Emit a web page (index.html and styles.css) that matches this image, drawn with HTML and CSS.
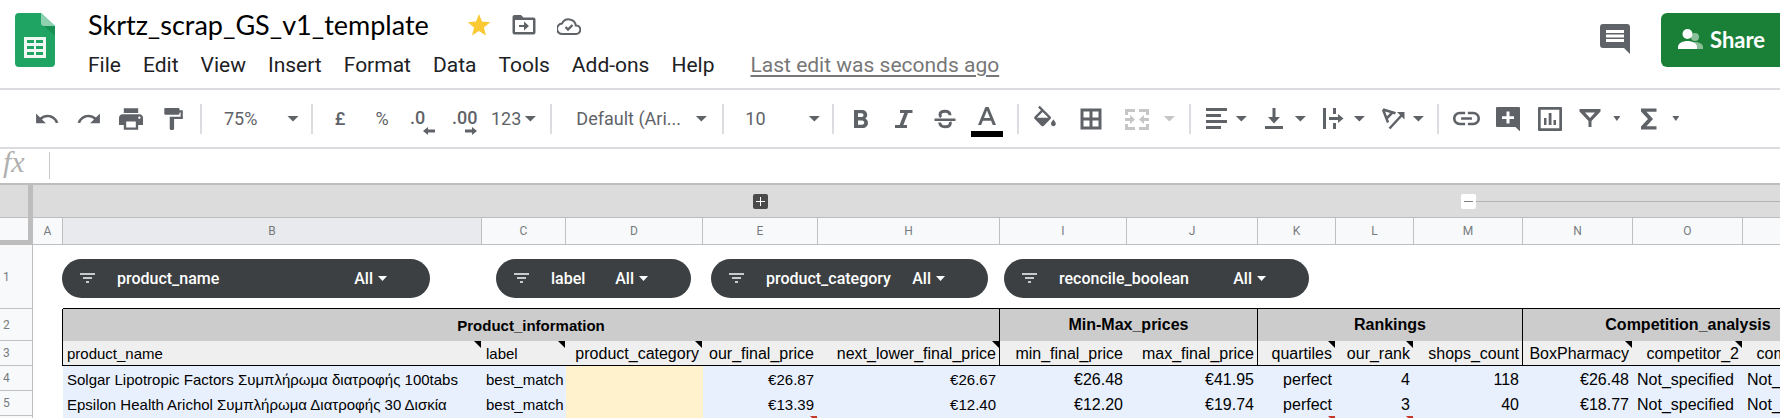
FILE: index.html
```html
<!DOCTYPE html>
<html lang="en">
<head>
<meta charset="utf-8">
<title>Skrtz_scrap_GS_v1_template</title>
<link rel="stylesheet" href="styles.css">
</head>
<body>
<header class="header">
  <svg class="logo" viewBox="0 0 40 54" aria-hidden="true">
    <path fill="#1fa463" d="M4 0h22l14 13v37a4 4 0 0 1-4 4H4a4 4 0 0 1-4-4V4a4 4 0 0 1 4-4z"/>
    <path fill="#188f53" d="M28 12l12 11V13z"/>
    <path fill="#8ed1b1" d="M26 0l14 13H29a3 3 0 0 1-3-3z"/>
    <path fill="#f1f8f4" fill-rule="evenodd" d="M9 24h22v21H9zM12 27v3h7v-3zM21 27v3h7v-3zM12 33v3h7v-3zM21 33v3h7v-3zM12 39v3h7v-3zM21 39v3h7v-3z"/>
  </svg>
  <div class="doc">
    <div class="title-row">
      <h1 class="title">Skrtz_scrap_GS_v1_template</h1>
      <button class="title-btn" aria-label="Star"><svg viewBox="0 0 24 24"><path fill="#fbc934" d="M12 1l3 7.600 8.300.6-6.400 5.200 2.100 8.100L12 18l-7 4.500 2.100-8.100L.7 9.200 9 8.600z"/></svg></button>
      <button class="title-btn" aria-label="Move"><svg viewBox="0 0 24 24"><path fill="#5f6368" fill-rule="evenodd" d="M2.500 2H9l2.500 2.500h10A2 2 0 0 1 23.500 6.500v13a2 2 0 0 1-2 2h-19a2 2 0 0 1-2-2V4a2 2 0 0 1 2-2zM3 7v12h18V7z"/><path fill="#5f6368" d="M12 8.500l5 4.500-5 4.500V14H7v-2h5z"/></svg></button>
      <button class="title-btn" aria-label="Document status"><svg viewBox="0 0 24 24"><path fill="none" stroke="#5f6368" stroke-width="2" d="M5.500 21a5.200 5.200 0 0 1-.5-10.400 7.300 7.300 0 0 1 13.800 1.800A4.300 4.300 0 0 1 19.200 21z"/><path fill="none" stroke="#5f6368" stroke-width="2.400" d="M8.500 14l2.500 2.500 4.500-4.500"/></svg></button>
    </div>
    <nav class="menus">
      <button class="menu">File</button>
      <button class="menu">Edit</button>
      <button class="menu">View</button>
      <button class="menu">Insert</button>
      <button class="menu">Format</button>
      <button class="menu">Data</button>
      <button class="menu">Tools</button>
      <button class="menu">Add-ons</button>
      <button class="menu">Help</button>
      <a class="last-edit" href="#">Last edit was seconds ago</a>
    </nav>
  </div>
  <button class="comments" aria-label="Open comment history"><svg viewBox="0 0 30 30"><path fill="#5f6368" fill-rule="evenodd" d="M3 0h24a3 3 0 0 1 3 3v27l-6-6H3a3 3 0 0 1-3-3V3a3 3 0 0 1 3-3zM6 6v3h18V6zM6 10.500v3h18v-3zM6 15v3h18v-3z"/></svg></button>
  <button class="share"><svg viewBox="0 0 25 20"><circle cx="17" cy="8" r="4" fill="#8cc09a"/><path fill="#8cc09a" d="M16 13c5 0 9 2 9 5v2h-9z"/><circle cx="9.500" cy="5" r="5" fill="#fff"/><path fill="#fff" d="M0 20v-2c0-4 5-6 9.500-6S19 14 19 18v2z"/></svg>Share</button>
</header>

<div class="toolbar" role="toolbar" aria-label="Main">
  <div class="group history">
    <button class="tool" aria-label="Undo"><svg viewBox="1 1 22 22"><path d="M12.500 8c-2.650 0-5.050.99-6.900 2.600L2 7v9h9l-3.620-3.620c1.390-1.160 3.160-1.880 5.120-1.880 3.540 0 6.550 2.310 7.600 5.500l2.370-.78C21.080 11.030 17.150 8 12.500 8z"/></svg></button>
    <button class="tool" aria-label="Redo"><svg viewBox="1 1 22 22"><path d="M18.400 10.600C16.550 8.990 14.150 8 11.500 8c-4.650 0-8.580 3.030-9.960 7.220L3.900 16c1.050-3.190 4.050-5.500 7.600-5.500 1.950 0 3.730.72 5.120 1.880L13 16h9V7l-3.600 3.600z"/></svg></button>
    <button class="tool" aria-label="Print"><svg viewBox="2 2 20 20"><path d="M19 8H5c-1.660 0-3 1.340-3 3v6h4v4h12v-4h4v-6c0-1.660-1.340-3-3-3zm-3 11H8v-5h8v5zm3-7c-.55 0-1-.45-1-1s.45-1 1-1 1 .45 1 1-.45 1-1 1zm-1-9H6v4h12V3z"/></svg></button>
    <button class="tool" aria-label="Paint format"><svg viewBox="1 1 22 22"><path d="M18 4V3c0-.55-.45-1-1-1H5c-.55 0-1 .45-1 1v4c0 .55.450 1 1 1h12c.55 0 1-.45 1-1V6h1v4H9v11c0 .55.450 1 1 1h2c.55 0 1-.45 1-1v-9h8V4h-3z"/></svg></button>
  </div>
  <span class="sep"></span>
  <label class="pick zoom"><select aria-label="Zoom"><option>75%</option></select><span class="caret"></span></label>
  <span class="sep"></span>
  <div class="group numbers">
    <button class="tool strong">£</button>
    <button class="tool">%</button>
    <button class="tool dec" aria-label="Decrease decimal places"><span>.0</span><svg viewBox="0 0 12 8"><path d="M0 4l5-4v2.500h7v3H5V8z"/></svg></button>
    <button class="tool dec" aria-label="Increase decimal places"><span>.00</span><svg viewBox="0 0 12 8"><path d="M12 4L7 0v2.500H0v3h7V8z"/></svg></button>
    <button class="formats">123<span class="caret"></span></button>
  </div>
  <span class="sep"></span>
  <label class="pick font"><select aria-label="Font"><option>Default (Ari...</option></select><span class="caret"></span></label>
  <span class="sep"></span>
  <label class="pick size"><select aria-label="Font size"><option>10</option></select><span class="caret"></span></label>
  <span class="sep"></span>
  <div class="group styles">
    <button class="tool" aria-label="Bold"><svg viewBox="0 0 24 24"><path d="M16.200 11.500c1.200-.8 2-2 2-3.600C18.200 5 16 3 12.800 3H5v18h8.600c3.200 0 5.400-2.100 5.400-5 0-2.100-1.100-3.700-2.800-4.500zM9 6.300h3.600c1.100 0 1.900.8 1.900 1.900s-.8 1.900-1.900 1.900H9zm4.100 11.400H9v-4.300h4.100c1.300 0 2.100 1 2.100 2.100 0 1.300-.8 2.200-2.100 2.200z"/></svg></button>
    <button class="tool" aria-label="Italic"><svg viewBox="0 0 24 24"><path d="M9 3v3h4.200L8.600 18H4v3h12v-3h-3.600L17 6h4.500V3z"/></svg></button>
    <button class="tool" aria-label="Strikethrough"><svg viewBox="0 0 24 24"><path d="M1.500 11.500h21V14h-21z"/><path fill="none" stroke="#5f6368" stroke-width="3" d="M17 8.200c0-2.600-2-3.900-4.900-3.900S7 5.600 7 7.800c0 1 .5 1.700 1.200 2.200M6.700 15.500c.2 3 2.300 4.300 5.400 4.300s5.200-1.300 5.200-3.600c0-.6-.1-1-.3-1.400"/></svg></button>
    <button class="tool color" aria-label="Text color"><svg viewBox="0 0 24 19"><path fill-rule="evenodd" d="M10.400 0h3.200L21 18h-3.200l-1.700-4.300H7.900L6.200 18H3zM12 3.500L9 11.100h6z"/></svg><span class="swatch"></span></button>
  </div>
  <span class="sep"></span>
  <div class="group cells">
    <button class="tool fill" aria-label="Fill color"><svg viewBox="2 1 20 20"><path d="M16.560 8.940L7.620 0 6.210 1.410l2.380 2.380-5.150 5.150c-.59.590-.59 1.540 0 2.120l5.500 5.500c.29.290.680.440 1.060.44s.77-.15 1.060-.44l5.500-5.500c.59-.58.590-1.530 0-2.120zM5.210 10L10 5.210 14.790 10H5.210zM19 11.500s-2 2.170-2 3.500c0 1.100.9 2 2 2s2-.9 2-2c0-1.330-2-3.500-2-3.500z"/></svg></button>
    <button class="tool" aria-label="Borders"><svg viewBox="0 0 24 24"><path fill-rule="evenodd" d="M1.500 1.500h21v21h-21zM4.500 4.500v6h6v-6zm9 0v6h6v-6zm-9 9v6h6v-6zm9 0v6h6v-6z"/></svg></button>
    <button class="tool off" aria-label="Merge cells"><svg viewBox="0 0 24 24"><path d="M0 2h10v3H3v3H0zM14 2h10v6h-3V5h-7zM0 17h3v3h7v3H0zM21 17h3v6H14v-3h7zM0 11h5V8l5 4.500L5 17v-3H0zM24 11h-5V8l-5 4.500 5 4.500v-3h5z"/></svg></button>
    <span class="caret off"></span>
  </div>
  <span class="sep"></span>
  <div class="group aligns">
    <button class="drop" aria-label="Horizontal align"><svg viewBox="0 0 24 24"><path d="M2 1h21v3H2zM2 7h15v3H2zM2 13h21v3H2zM2 19h15v3H2z"/></svg><span class="caret"></span></button>
    <button class="drop" aria-label="Vertical align"><svg viewBox="0 0 24 24"><path d="M2 19h18v3H2zM9.500 1h3v9h4.500l-6 6.500L5 10h4.500z"/></svg><span class="caret"></span></button>
    <button class="drop" aria-label="Text wrapping"><svg viewBox="0 0 24 24"><path d="M1 1h3v21H1zM11 1h3v6h-3zM11 16h3v6h-3zM7 10h9V7l5.500 4.500L16 16v-3H7z"/></svg><span class="caret"></span></button>
    <button class="drop" aria-label="Text rotation"><svg viewBox="0 0 24 24"><path fill="none" stroke="#5f6368" stroke-width="2.500" d="M8.500 21.500L20.500 8.500M2 2.500l12.500 3.700M2 2.500l5 13M11.500 5.500L5.500 11.500"/><path d="M16 5h7.500v7.500z"/></svg><span class="caret"></span></button>
  </div>
  <span class="sep"></span>
  <div class="group inserts">
    <button class="tool wide" aria-label="Insert link"><svg viewBox="2 5 20 14"><path d="M3.900 12c0-1.710 1.390-3.100 3.100-3.100h4V7H7c-2.760 0-5 2.240-5 5s2.240 5 5 5h4v-1.900H7c-1.710 0-3.100-1.390-3.100-3.100zM8 13h8v-2H8v2zm9-6h-4v1.900h4c1.710 0 3.100 1.390 3.100 3.100s-1.390 3.100-3.100 3.100h-4V17h4c2.760 0 5-2.240 5-5s-2.240-5-5-5z"/></svg></button>
    <button class="tool" aria-label="Insert comment"><svg viewBox="0 0 24 24"><path fill-rule="evenodd" d="M1 0h22a1 1 0 0 1 1 1v23.500L19.500 20H1a1 1 0 0 1-1-1V1a1 1 0 0 1 1-1zM10.500 4.500v4.700H6v2.800h4.500v4.500h3V12H18V9.200h-4.500V4.500z"/></svg></button>
    <button class="tool" aria-label="Insert chart"><svg viewBox="0 0 24 24"><path fill-rule="evenodd" d="M1 0h22a1 1 0 0 1 1 1v22a1 1 0 0 1-1 1H1a1 1 0 0 1-1-1V1a1 1 0 0 1 1-1zM2.700 2.700v18.600h18.600V2.700z"/><path d="M6 11h2.500v7H6zM10.700 6h2.800v12h-2.800zM15.500 13H18v5h-2.500z"/></svg></button>
    <button class="drop small" aria-label="Create a filter"><svg viewBox="0 0 24 24"><path fill-rule="evenodd" d="M1.500 2h21v2.500L13.500 14v6h-3v-6L1.500 4.500zM7 5.500l5 5.500 5-5.500z"/></svg><span class="caret"></span></button>
    <button class="drop small" aria-label="Functions"><svg viewBox="0 0 24 24"><path d="M4 1.500h15.500v3.200H9.500l6.500 7.300-6.500 7.300h10v3.200H4v-3L11 12 4 4.500z"/></svg><span class="caret"></span></button>
  </div>
</div>

<div class="formula">
  <label class="fx" for="formula">fx</label>
  <input class="formula-input" id="formula" type="text">
</div>

<main class="sheet">
  <table class="grid">
    <colgroup>
      <col class="c-head"><col class="c-a"><col class="c-b"><col class="c-c"><col class="c-d"><col class="c-e"><col class="c-h"><col class="c-i"><col class="c-j"><col class="c-k"><col class="c-k"><col class="c-m"><col class="c-n"><col class="c-n"><col class="c-n">
    </colgroup>
    <thead>
      <tr class="outline">
        <td class="frozen"></td>
        <td></td><td></td><td></td><td></td>
        <td><button class="toggle plus" aria-label="Expand group"><svg viewBox="0 0 15 15"><path d="M7 3h1v4h4v1H8v4H7V8H3V7h4z"/></svg></button></td>
        <td></td><td></td><td></td><td></td><td></td>
        <td class="start"><button class="toggle minus" aria-label="Collapse group"><svg viewBox="0 0 15 15"><path d="M3 7h9v1H3z"/></svg></button></td>
        <td class="span"></td><td class="span"></td><td class="span"></td>
      </tr>
      <tr class="letters">
        <th class="frozen corner"></th>
        <th>A</th><th class="active">B</th><th>C</th><th>D</th><th>E</th><th>H</th><th>I</th><th>J</th><th>K</th><th>L</th><th>M</th><th>N</th><th>O</th><th></th>
      </tr>
    </thead>
    <tbody>
      <tr class="slicer-row">
        <th>1</th><td></td>
        <td class="slicers-cell" colspan="13">
          <div class="slicers">
            <button class="slicer s-name"><svg viewBox="0 0 15 11"><path d="M0 0h15v2H0zM3 4h9v2H3zM6 8h3v2H6z"/></svg><span>product_name</span><span class="all">All<span class="caret"></span></span></button>
            <button class="slicer s-label"><svg viewBox="0 0 15 11"><path d="M0 0h15v2H0zM3 4h9v2H3zM6 8h3v2H6z"/></svg><span>label</span><span class="all">All<span class="caret"></span></span></button>
            <button class="slicer s-category"><svg viewBox="0 0 15 11"><path d="M0 0h15v2H0zM3 4h9v2H3zM6 8h3v2H6z"/></svg><span>product_category</span><span class="all">All<span class="caret"></span></span></button>
            <button class="slicer s-reconcile"><svg viewBox="0 0 15 11"><path d="M0 0h15v2H0zM3 4h9v2H3zM6 8h3v2H6z"/></svg><span>reconcile_boolean</span><span class="all">All<span class="caret"></span></span></button>
          </div>
        </td>
      </tr>
      <tr class="sections">
        <th>2</th><td class="edge"></td>
        <td class="section sm edge" colspan="5">Product_information</td>
        <td class="section edge" colspan="2">Min-Max_prices</td>
        <td class="section edge" colspan="3">Rankings</td>
        <td class="section" colspan="3">Competition_analysis</td>
      </tr>
      <tr class="fields">
        <th>3</th><td class="edge"></td>
        <td class="left sm note">product_name</td><td class="left sm note">label</td><td class="note">product_category</td><td>our_final_price</td><td class="note edge">next_lower_final_price</td><td>min_final_price</td><td class="edge">max_final_price</td><td class="note">quartiles</td><td class="note">our_rank</td><td class="edge">shops_count</td><td class="note">BoxPharmacy</td><td class="note">competitor_2</td><td>competitor_3</td>
      </tr>
      <tr class="data">
        <th>4</th><td></td>
        <td class="left sm">Solgar Lipotropic Factors Συμπλήρωμα διατροφής 100tabs</td><td class="left sm">best_match</td><td class="empty"></td><td class="sm">€26.87</td><td class="sm">€26.67</td><td>€26.48</td><td>€41.95</td><td>perfect</td><td>4</td><td>118</td><td>€26.48</td><td class="left">Not_specified</td><td class="left">Not_specified</td>
      </tr>
      <tr class="data">
        <th>5</th><td></td>
        <td class="left sm">Epsilon Health Arichol Συμπλήρωμα Διατροφής 30 Δισκία</td><td class="left sm">best_match</td><td class="empty"></td><td class="sm">€13.39</td><td class="sm">€12.40</td><td>€12.20</td><td>€19.74</td><td>perfect</td><td>3</td><td>40</td><td>€18.77</td><td class="left">Not_specified</td><td class="left">Not_specified</td>
      </tr>
      <tr class="data">
        <th></th><td></td>
        <td></td><td></td><td class="empty"></td><td class="note alert"></td><td></td><td></td><td></td><td class="note alert"></td><td class="note alert"></td><td></td><td></td><td></td><td></td>
      </tr>
    </tbody>
  </table>
</main>
</body>
</html>
```
FILE: styles.css
```css
* { box-sizing: border-box; }

body {
  display: flex;
  flex-direction: column;
  margin: 0;
  height: 100vh;
  overflow: hidden;
  background: #fff;
  color: #202124;
  font-family: Roboto, sans-serif;
}

button {
  margin: 0;
  padding: 0;
  border: 0;
  background: none;
  color: inherit;
  font: inherit;
}

svg { display: block; }

/* Header */
.header {
  display: flex;
  flex: none;
  align-items: flex-start;
  height: 90px;
  padding-left: 15px;
  border-bottom: 2px solid #dadce0;
}
.logo { flex: none; width: 40px; height: 54px; margin-top: 13px; }
.doc { flex: 1; margin-left: 33px; }
.title-row { display: flex; align-items: center; gap: 21px; padding-top: 9px; height: 41px; }
.title {
  margin: 0 17px 0 0;
  color: #000;
  font-family: Lato, sans-serif;
  font-size: 27px;
  font-weight: 400;
  line-height: 32px;
}
.title-btn svg { width: 24px; height: 24px; }
.menus { display: flex; align-items: center; gap: 22px; height: 48px; font-size: 21px; line-height: 24px; }
.last-edit {
  margin-left: 14px;
  color: #777;
  text-underline-offset: 3px;
}
.comments { margin: 24px 31px 0 0; }
.comments svg { width: 30px; height: 30px; }
.share {
  display: flex;
  align-items: center;
  gap: 7px;
  width: 119px;
  height: 54px;
  margin-top: 13px;
  padding: 0 0 2px 17px;
  border-radius: 6px 0 0 6px;
  background: #1a8038;
  color: #fff;
  font-family: Lato, sans-serif;
  font-size: 22px;
  font-weight: 700;
}
.share svg { width: 25px; height: 20px; }

/* Toolbar */
.toolbar {
  display: flex;
  flex: none;
  align-items: center;
  height: 59px;
  border-bottom: 2px solid #dadce0;
  color: #5f6368;
  fill: #5f6368;
  font-size: 18px;
}
.group { display: flex; align-items: center; height: 57px; }
.sep { flex: none; width: 2px; height: 30px; background: #dadce0; }
.tool { display: flex; justify-content: center; align-items: center; flex: none; width: 42px; height: 36px; }
.tool svg { width: 24px; height: 24px; }
.strong { font-weight: 500; }
.caret {
  flex: none;
  width: 12px;
  height: 6px;
  background: #5f6368;
  clip-path: polygon(0 0, 100% 0, 50% 100%);
}
.off { fill: #c4c6c8; }
.caret.off { background: #c4c6c8; }
.history { padding: 0 6px 0 26px; }
.pick { display: flex; align-items: center; flex: none; height: 36px; }
.pick select {
  flex: 1;
  min-width: 0;
  padding: 0;
  border: 0;
  background: none;
  appearance: none;
  color: inherit;
  font: inherit;
}
.zoom { width: 109px; padding: 0 12px 0 22px; }
.numbers { padding: 0 14px 0 6px; }
.dec { flex-direction: column; align-items: flex-start; justify-content: flex-start; padding: 8px 0 0 7px; font-weight: 500; line-height: 18px; }
.tool.dec svg { align-self: flex-end; width: 12px; height: 8px; margin-right: 10px; }
.formats { display: flex; align-items: center; gap: 3px; margin-left: 4px; }
.font { width: 170px; padding: 0 15px 0 24px; }
.size { width: 108px; padding: 0 12px 0 21px; }
.styles { padding: 0 9px 0 6px; }
.color { flex-direction: column; gap: 5px; padding-top: 6px; }
.tool.color svg { height: 19px; }
.swatch { width: 32px; height: 6px; background: #000; }
.cells { padding: 0 14px 0 3px; }
.cells .tool { width: 46px; }
.fill svg { overflow: visible; }
.cells .caret { margin-left: 3px; }
.aligns { gap: 16px; padding: 0 13px; }
.drop { display: flex; align-items: center; gap: 7px; }
.drop svg { width: 24px; height: 24px; }
.inserts { padding-left: 6px; }
.wide svg { width: 27px; height: 19px; }
.small { gap: 11px; margin: 0 10px 0 7px; }
.small .caret { width: 7px; height: 5px; }

/* Formula bar */
.formula { display: flex; flex: none; align-items: flex-start; height: 36px; border-bottom: 2px solid #bdbdbd; }
.fx {
  width: 49px;
  padding-left: 3px;
  color: #b0b0b0;
  font-family: "Liberation Serif", serif;
  font-size: 30px;
  font-style: italic;
  line-height: 26px;
}
.formula-input {
  flex: 1;
  height: 27px;
  margin-top: 3px;
  padding: 0 8px;
  border: 0;
  border-left: 1px solid #c8c8c8;
  font-size: 16px;
}

/* Grid */
.sheet { flex: 1; min-height: 0; overflow: hidden; }
.grid { width: 1853px; table-layout: fixed; border-spacing: 0; color: #000; }
.c-head { width: 33px; }
.c-a { width: 30px; }
.c-b { width: 419px; }
.c-c { width: 84px; }
.c-d { width: 137px; }
.c-e { width: 115px; }
.c-h { width: 182px; }
.c-i { width: 127px; }
.c-j { width: 131px; }
.c-k { width: 78px; }
.c-m { width: 109px; }
.c-n { width: 110px; }
.grid th {
  padding: 0 0 0 3px;
  border: solid #c0c0c0;
  border-width: 0 1px 1px 0;
  background: #f8f9fa;
  color: #777b80;
  font-size: 12px;
  font-weight: 400;
  text-align: left;
}
.grid td { padding: 0; }
.outline { height: 33px; }
.grid .outline td { border-bottom: 1px solid #bdbdbd; background: #dcdcdc; }
.grid .outline .frozen { border-right: 5px solid #bdbdbd; }
.grid .outline .span { background: linear-gradient(#b4b4b4, #b4b4b4) center / 100% 1px no-repeat #dcdcdc; }
.grid .outline .start { background: linear-gradient(#b4b4b4, #b4b4b4) right / 50% 1px no-repeat #dcdcdc; }
.toggle { display: block; width: 15px; height: 15px; margin: 0 auto; border-radius: 2px; }
.plus { background: #4a4a4a; fill: #fff; }
.minus { background: #fff; fill: #808080; }
.letters { height: 27px; }
.grid .letters th { padding: 0; text-align: center; }
.grid .active { background: #e8eaed; }
.grid .corner { border-right: 5px solid #bdbdbd; border-bottom: 5px solid #bdbdbd; }

.slicer-row { height: 64px; }
.grid .slicer-row td { border-bottom: 1px solid #fff; vertical-align: top; }
.grid .slicer-row .slicers-cell { border-bottom-color: #000; }
.slicers { display: flex; margin-left: -1px; padding-top: 14px; }
.slicer {
  display: flex;
  align-items: center;
  flex: none;
  height: 39px;
  padding: 0 43px 0 18px;
  border-radius: 20px;
  background: #3c4043;
  color: #fff;
  font-size: 16px;
  font-weight: 500;
}
.slicer svg { width: 15px; height: 11px; margin-right: 22px; fill: #c8cacc; }
.all { display: flex; align-items: center; gap: 5px; margin-left: auto; }
.all .caret { width: 9px; height: 5px; background: #fff; }
.s-name { width: 368px; }
.s-label { width: 195px; margin-left: 66px; }
.s-category { width: 277px; margin-left: 20px; }
.s-reconcile { width: 305px; margin-left: 16px; }

.sections { height: 32px; }
.fields, .data { height: 25px; }
.grid .edge { border-right: 1px solid #000; }
.section { background: #ccc; font-family: "Liberation Sans", Arial, sans-serif; font-size: 16px; font-weight: 700; text-align: center; }
.fields td, .data td {
  position: relative;
  overflow: hidden;
  font-family: "Liberation Sans", Arial, sans-serif;
  font-size: 16px;
  line-height: 18px;
  text-align: right;
  vertical-align: bottom;
  white-space: nowrap;
}
.grid .fields td, .grid .data td { padding: 0 4px 2px 4px; }
.grid .fields .edge { padding-right: 3px; }
.fields td + td { border-bottom: 1px solid #000; background: #efefef; }
.data td + td { background: #e8f0fe; }
.data td + .empty { background: #fff2cc; }
.grid td.sm { font-size: 15px; }
.grid td.left { text-align: left; }
.note::after {
  content: "";
  position: absolute;
  top: 0;
  right: 1px;
  width: 7px;
  height: 7px;
  background: #000;
  clip-path: polygon(0 0, 100% 0, 100% 100%);
}
.edge::after { right: 0; }
.alert::after { background: #c53929; }
```
